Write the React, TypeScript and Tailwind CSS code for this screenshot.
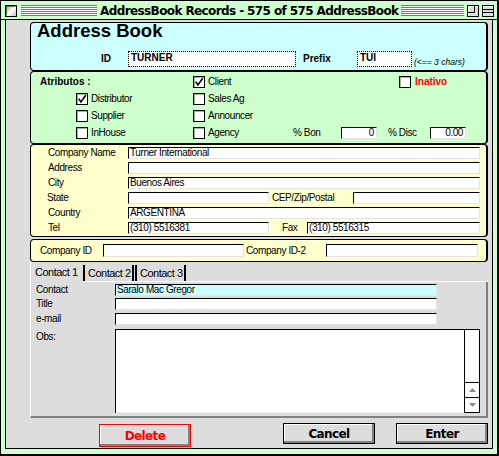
import React from "react";

const ui = "font-['Liberation_Sans',Arial,sans-serif]";
const chi = "font-['DejaVu_Sans',Verdana,sans-serif] font-bold text-[12px] tracking-[-0.6px] leading-[12px] whitespace-nowrap";
const lbl = "text-[10px] tracking-[-0.4px] leading-[10px] whitespace-nowrap";

function Stripes({ className = "" }: { className?: string }) {
  return (
    <div
      className={`h-[11px] bg-[image:repeating-linear-gradient(to_bottom,#777777_0px,#777777_1px,#ffffff_1px,#ffffff_2px)] ${className}`}
    />
  );
}

function CloseBox() {
  return (
    <svg width="12" height="12" viewBox="0 0 12 12" className="shrink-0">
      <defs>
        <linearGradient id="cb" x1="0" y1="0" x2="1" y2="1">
          <stop offset="0" stopColor="#888888" />
          <stop offset="0.5" stopColor="#ffffff" />
          <stop offset="1" stopColor="#bbbbbb" />
        </linearGradient>
      </defs>
      <rect x="0.5" y="0.5" width="11" height="11" fill="url(#cb)" stroke="#000" />
      <path d="M1.5 10.5V1.5H10.5" stroke="#666" fill="none" />
    </svg>
  );
}

function ZoomBox({ className = "" }: { className?: string }) {
  return (
    <svg width="12" height="12" viewBox="0 0 12 12" className={`shrink-0 ${className}`}>
      <rect x="0.5" y="0.5" width="11" height="11" fill="#dddddd" stroke="#000" />
      <path d="M1.5 10.5V1.5H10.5" stroke="#fff" fill="none" />
      <path d="M0.5 7.5H7.5V0.5" stroke="#000" fill="none" />
    </svg>
  );
}

function ShadeBox({ className = "" }: { className?: string }) {
  return (
    <svg width="12" height="12" viewBox="0 0 12 12" className={`shrink-0 ${className}`}>
      <rect x="0.5" y="0.5" width="11" height="11" fill="#dddddd" stroke="#000" />
      <path d="M1.5 10.5V1.5H10.5" stroke="#fff" fill="none" />
      <path d="M0.5 4.5H11.5M0.5 7.5H11.5" stroke="#000" fill="none" />
    </svg>
  );
}

function Box({ checked = false }: { checked?: boolean }) {
  return (
    <span className="relative inline-block w-[12px] h-[12px] shrink-0 border border-black bg-white shadow-[inset_1px_1px_0_#aaaaaa]">
      {checked && (
        <svg width="10" height="10" viewBox="0 0 10 10" className="absolute left-0 top-0">
          <path d="M1.6 4.6L3.9 7.9L8.8 1.2" fill="none" stroke="#000" strokeWidth="1.6" />
        </svg>
      )}
    </span>
  );
}

function Opt({
  label,
  checked = false,
  w = "",
  textClass = "",
  gap = "ml-[3px]",
}: {
  label: string;
  checked?: boolean;
  w?: string;
  textClass?: string;
  gap?: string;
}) {
  return (
    <div className={`flex items-center shrink-0 ${w}`}>
      <Box checked={checked} />
      <span className={`${gap} ${lbl} ${textClass}`}>{label}</span>
    </div>
  );
}

function Field({
  w,
  h = "h-[12px]",
  bg = "bg-white",
  className = "",
  children,
}: {
  w: string;
  h?: string;
  bg?: string;
  className?: string;
  children?: React.ReactNode;
}) {
  return (
    <div
      className={`${w} ${h} ${bg} shrink-0 border border-t-black border-l-black border-b-[#e4e4e4] border-r-[#e4e4e4] pl-[1px] overflow-hidden ${lbl} ${className}`}
    >
      {children}
    </div>
  );
}

function Btn({
  children,
  className = "",
  text = "text-black",
}: {
  children: React.ReactNode;
  className?: string;
  text?: string;
}) {
  return (
    <div
      className={`w-[92px] shrink-0 flex items-center justify-center bg-[#dddddd] border shadow-[inset_-2px_-2px_0_#808080,inset_1px_1px_0_#ffffff] ${chi} ${text} ${className}`}
    >
      {children}
    </div>
  );
}

export default function App() {
  return (
    <div
      className={`w-[499px] h-[456px] flex flex-col bg-[#ccffcc] border-t border-l border-r-2 border-b-2 border-black text-black ${ui}`}
    >
      {/* title bar */}
      <div className="h-[19px] shrink-0 flex items-start pt-[4px] pl-[4px] pr-[3px] border-b border-black">
        <CloseBox />
        <Stripes className="ml-[4px] w-[76px] shrink-0" />
        <div className={`ml-[3px] ${chi}`}>AddressBook Records - 575 of 575 AddressBook</div>
        <Stripes className="ml-[3px] flex-1" />
        <ZoomBox className="ml-[3px]" />
        <ShadeBox className="ml-[3px]" />
      </div>

      {/* body */}
      <div className="flex-1 flex px-[4px] pb-[5px]">
        <div className="flex-1 flex flex-col border-l border-r border-b border-black bg-[#dddddd] pl-[24px] pr-[4px] pt-[2px]">
          {/* header panel */}
          <div className="h-[49px] shrink-0 rounded-[4px] border border-black border-r-2 bg-[#ccffff] flex flex-col">
            <div className="pl-[6px] text-[18.5px] font-bold leading-[16px]">Address Book</div>
            <div className="flex items-center mt-[12px] h-[16px]">
              <div className="w-[97px] shrink-0 pl-[70px] text-[10px] font-bold leading-[10px]">ID</div>
              <div className="w-[168px] h-[16px] shrink-0 border border-dotted border-black bg-white pl-[2px] pt-[1px] text-[10px] font-bold leading-[10px]">
                TURNER
              </div>
              <div className="w-[61px] shrink-0 pl-[7px] text-[10px] font-bold leading-[10px]">Prefix</div>
              <div className="w-[55px] h-[16px] shrink-0 border border-dotted border-black bg-white pl-[2px] pt-[1px] text-[10px] font-bold leading-[10px]">
                TUI
              </div>
              <div className="ml-[2px] self-end text-[8.5px] italic leading-[10px] whitespace-nowrap">(&lt;== 3 chars)</div>
            </div>
          </div>

          {/* attributes panel */}
          <div className="h-[73px] shrink-0 rounded-[4px] border border-black border-r-2 bg-[#ccffcc] flex flex-col pt-[1px]">
            <div className="flex items-center h-[17px]">
              <div className="w-[162px] shrink-0 pl-[9px] text-[10px] font-bold leading-[10px]">Atributos :</div>
              <Opt w="w-[206px]" label="Client" checked />
              <Opt label="Inativo" gap="ml-[4px]" textClass="font-bold text-[#ff0000] tracking-[0px]" />
            </div>
            <div className="flex items-center h-[17px]">
              <div className="w-[45px] shrink-0" />
              <Opt w="w-[117px]" label="Distributor" checked />
              <Opt label="Sales Ag" />
            </div>
            <div className="flex items-center h-[17px]">
              <div className="w-[45px] shrink-0" />
              <Opt w="w-[117px]" label="Supplier" />
              <Opt label="Announcer" />
            </div>
            <div className="flex items-center h-[17px]">
              <div className="w-[45px] shrink-0" />
              <Opt w="w-[117px]" label="InHouse" />
              <Opt w="w-[100px]" label="Agency" />
              <div className={`w-[48px] shrink-0 ${lbl}`}>% Bon</div>
              <Field w="w-[36px]" className="text-right pr-[2px]">0</Field>
              <div className={`w-[53px] shrink-0 pl-[11px] ${lbl}`}>% Disc</div>
              <Field w="w-[36px]" className="text-right pr-[2px]">0.00</Field>
            </div>
          </div>

          {/* company panel */}
          <div className="h-[93px] shrink-0 rounded-[4px] border border-black border-r-2 bg-[#ffffcc] flex flex-col gap-[3px] pt-[2px]">
            <div className="flex items-center h-[12px]">
              <div className={`w-[97px] shrink-0 pl-[17px] ${lbl}`}>Company Name</div>
              <Field w="w-[352px]">Turner International</Field>
            </div>
            <div className="flex items-center h-[12px]">
              <div className={`w-[97px] shrink-0 pl-[17px] ${lbl}`}>Address</div>
              <Field w="w-[352px]" />
            </div>
            <div className="flex items-center h-[12px]">
              <div className={`w-[97px] shrink-0 pl-[17px] ${lbl}`}>City</div>
              <Field w="w-[352px]">Buenos Aires</Field>
            </div>
            <div className="flex items-center h-[12px]">
              <div className={`w-[97px] shrink-0 pl-[16px] ${lbl}`}>State</div>
              <Field w="w-[141px]" />
              <div className={`w-[84px] shrink-0 pl-[3px] ${lbl}`}>CEP/Zip/Postal</div>
              <Field w="w-[127px]" />
            </div>
            <div className="flex items-center h-[12px]">
              <div className={`w-[97px] shrink-0 pl-[17px] ${lbl}`}>Country</div>
              <Field w="w-[352px]">ARGENTINA</Field>
            </div>
            <div className="flex items-center h-[12px]">
              <div className={`w-[97px] shrink-0 pl-[17px] ${lbl}`}>Tel</div>
              <Field w="w-[141px]">(310) 5516381</Field>
              <div className={`w-[38px] shrink-0 pl-[13px] ${lbl}`}>Fax</div>
              <Field w="w-[173px]">(310) 5516315</Field>
            </div>
          </div>

          {/* company id panel */}
          <div className="mt-[2px] h-[23px] shrink-0 rounded-[4px] border border-black border-r-2 bg-[#ffffcc] flex items-center">
            <div className={`w-[72px] shrink-0 pl-[9px] ${lbl}`}>Company ID</div>
            <Field w="w-[141px]" h="h-[13px]" />
            <div className={`w-[82px] shrink-0 pl-[2px] ${lbl}`}>Company ID-2</div>
            <Field w="w-[152px]" h="h-[13px]" />
          </div>

          {/* tabs */}
          <div className="flex items-stretch h-[20px] shrink-0">
            <div className="w-[53px] shrink-0 border-l border-white pl-[4px] flex items-center text-[11px] tracking-[-0.5px] leading-[11px] whitespace-nowrap">
              Contact 1
            </div>
            <div className="flex-1 flex flex-col">
              <div className="flex-1 flex items-end">
                <div className="w-[51px] h-[16px] shrink-0 border-l-2 border-r-2 border-black pl-[3px] flex items-center text-[11px] tracking-[-0.5px] leading-[11px] whitespace-nowrap">
                  Contact 2
                </div>
                <div className="ml-[1px] w-[51px] h-[16px] shrink-0 border-l-2 border-r-2 border-black pl-[3px] flex items-center text-[11px] tracking-[-0.5px] leading-[11px] whitespace-nowrap">
                  Contact 3
                </div>
              </div>
              <div className="h-[1px] bg-white" />
            </div>
          </div>

          {/* tab panel */}
          <div className="h-[136px] shrink-0 border-l border-l-white border-r-2 border-r-[#808080] border-b-2 border-b-[#808080] flex flex-col">
            <div className="mt-[2px] flex items-center h-[12px]">
              <div className={`w-[84px] shrink-0 pl-[5px] ${lbl}`}>Contact</div>
              <Field w="w-[322px]" bg="bg-[#ccffff]">Saralo Mac Gregor</Field>
            </div>
            <div className="mt-[2px] flex items-center h-[12px]">
              <div className={`w-[84px] shrink-0 pl-[5px] ${lbl}`}>Title</div>
              <Field w="w-[322px]" />
            </div>
            <div className="mt-[3px] flex items-center h-[12px]">
              <div className={`w-[84px] shrink-0 pl-[5px] ${lbl}`}>e-mail</div>
              <Field w="w-[322px]" />
            </div>
            <div className="mt-[4px] flex items-start">
              <div className={`w-[84px] shrink-0 pl-[5px] pt-[3px] ${lbl}`}>Obs:</div>
              <div className="w-[365px] h-[84px] shrink-0 flex border-t border-l border-black">
                <div className="flex-1 bg-white border-b border-b-[#eeeeee]" />
                <div className="w-[16px] shrink-0 flex flex-col bg-white border-l border-r border-b border-black">
                  <div className="flex-1" />
                  <div className="h-[15px] border-t border-black flex items-center justify-center">
                    <svg width="7" height="4" viewBox="0 0 7 4">
                      <path d="M0 4L3.5 0L7 4Z" fill="#888888" />
                    </svg>
                  </div>
                  <div className="h-[15px] border-t border-black flex items-center justify-center">
                    <svg width="7" height="4" viewBox="0 0 7 4">
                      <path d="M0 0L3.5 4L7 0Z" fill="#888888" />
                    </svg>
                  </div>
                </div>
              </div>
            </div>
          </div>

          {/* buttons */}
          <div className="mt-[5px] flex items-start shrink-0">
            <Btn className="ml-[69px] mt-[1px] h-[23px] border-[#ff0000]" text="text-[#ff0000]">
              Delete
            </Btn>
            <Btn className="ml-[92px] h-[21px] border-black">Cancel</Btn>
            <Btn className="ml-[21px] h-[21px] border-black">Enter</Btn>
          </div>
        </div>
      </div>
    </div>
  );
}
